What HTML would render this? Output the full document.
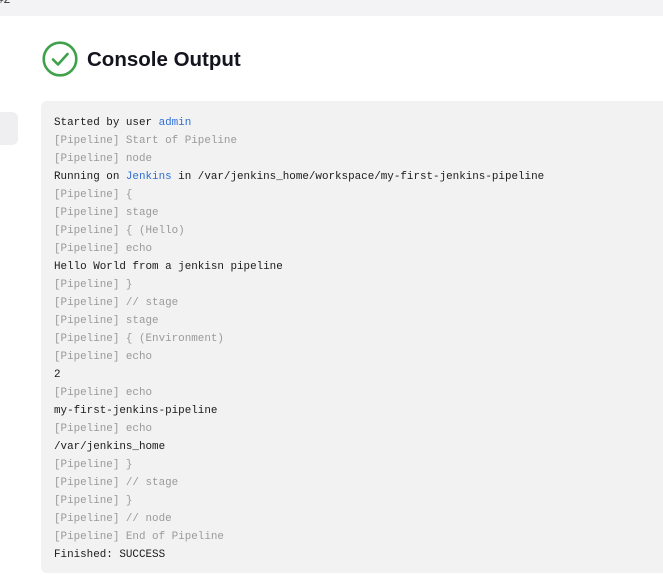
<!DOCTYPE html>
<html><head><style>
html,body{margin:0;padding:0;background:#fff;width:663px;height:575px;overflow:hidden;position:relative;font-family:"Liberation Sans",sans-serif}
.top{position:absolute;left:0;top:0;width:663px;height:16px;background:#f3f3f5}
.top span{position:absolute;left:-3px;top:-8px;font-size:12px;color:#333}
.side{position:absolute;left:-10px;top:112px;width:28px;height:33px;background:#efeff2;border-radius:6px}
.h{position:absolute;left:87px;top:48px;font-size:20.5px;font-weight:bold;color:#14141f}
.icon{position:absolute;left:42px;top:41px}
.box{position:absolute;left:41px;top:101px;width:640px;height:472px;background:#f2f2f2;border-radius:6px}
pre{position:absolute;left:54px;top:113px;margin:0;font-family:"Liberation Mono",monospace;font-size:10.9px;line-height:18px;color:#1a1a1a;padding-top:1px}
.g{color:#9a9a9a}
a{color:#2f6fd6;text-decoration:none}
</style></head><body>
<div class="top"><span>#2</span></div>
<div class="side"></div>
<svg class="icon" width="36" height="36" viewBox="0 0 36 36"><circle cx="18" cy="18" r="16.3" fill="none" stroke="#3fa24a" stroke-width="2.6"/><path d="M11 18.5 L16 23.5 L25.5 13" fill="none" stroke="#3fa24a" stroke-width="2.6" stroke-linecap="round" stroke-linejoin="round"/></svg>
<div class="h">Console Output</div>
<div class="box"></div>
<pre>Started by user <a>admin</a>
<span class="g">[Pipeline] Start of Pipeline</span>
<span class="g">[Pipeline] node</span>
Running on <a>Jenkins</a> in /var/jenkins_home/workspace/my-first-jenkins-pipeline
<span class="g">[Pipeline] {</span>
<span class="g">[Pipeline] stage</span>
<span class="g">[Pipeline] { (Hello)</span>
<span class="g">[Pipeline] echo</span>
Hello World from a jenkisn pipeline
<span class="g">[Pipeline] }</span>
<span class="g">[Pipeline] // stage</span>
<span class="g">[Pipeline] stage</span>
<span class="g">[Pipeline] { (Environment)</span>
<span class="g">[Pipeline] echo</span>
2
<span class="g">[Pipeline] echo</span>
my-first-jenkins-pipeline
<span class="g">[Pipeline] echo</span>
/var/jenkins_home
<span class="g">[Pipeline] }</span>
<span class="g">[Pipeline] // stage</span>
<span class="g">[Pipeline] }</span>
<span class="g">[Pipeline] // node</span>
<span class="g">[Pipeline] End of Pipeline</span>
Finished: SUCCESS</pre>
</body></html>
